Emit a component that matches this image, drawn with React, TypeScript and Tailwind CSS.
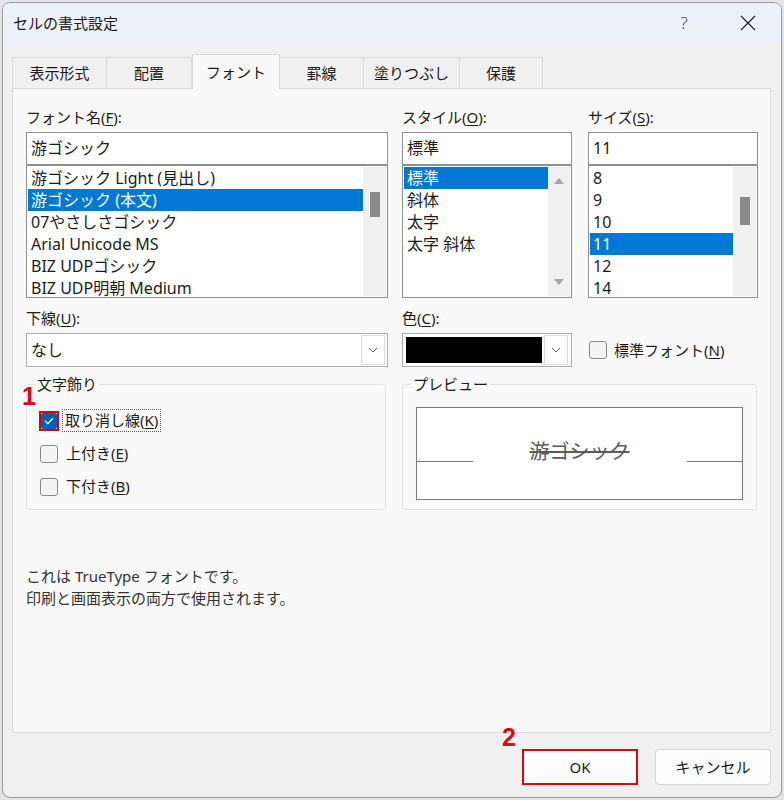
import React from 'react';

const fontFamily = "font-['Noto_Sans','Noto_Sans_CJK_JP',sans-serif]";

function Chevron() {
  return (
    <svg width="10" height="6" viewBox="0 0 10 6">
      <path d="M1 1 L5 5 L9 1" fill="none" stroke="#606060" strokeWidth="1" />
    </svg>
  );
}

function CheckBox({ checked = false }: { checked?: boolean }) {
  if (checked) {
    return (
      <div className="w-[20px] h-[20px] border-2 border-[#e00000] flex items-center justify-center shrink-0">
        <div className="w-[16px] h-[16px] bg-[#005fb8] rounded-[2px] flex items-center justify-center">
          <svg width="10" height="8" viewBox="0 0 10 8">
            <path d="M1 4 L3.8 6.6 L9 1.2" fill="none" stroke="#ffffff" strokeWidth="1.3" />
          </svg>
        </div>
      </div>
    );
  }
  return <div className="w-[18px] h-[18px] border border-[#8a8a8a] bg-[#f4f4f4] rounded-[3px] shrink-0 mx-[1px]" />;
}

function Label({ children }: { children: React.ReactNode }) {
  return <div className="h-[22px] leading-[22px] mb-[4px] text-[15px] text-[#1b1b1b]">{children}</div>;
}

function ListBox({
  items,
  selected,
  scroll,
}: {
  items: string[];
  selected: number;
  scroll: 'thumb' | 'thumbLow' | 'arrows';
}) {
  return (
    <div className="h-[133px] border border-[#8f8f8f] bg-white flex overflow-hidden">
      <div className="flex-1 pt-[1px] pl-[1px]">
        {items.map((item, i) => (
          <div
            key={i}
            className={`h-[22px] leading-[22px] px-[3px] text-[16px] whitespace-nowrap ${
              i === selected ? 'bg-[#0078d4] text-white' : 'text-[#1b1b1b]'
            }`}
          >
            {item}
          </div>
        ))}
      </div>
      {scroll === 'arrows' ? (
        <div className="w-[22px] bg-[#f0f0f0] my-[1px] mr-[1px] flex flex-col items-center justify-between py-[11px]">
          <svg width="10" height="6" viewBox="0 0 10 6">
            <path d="M0 6 L5 0 L10 6 Z" fill="#a6a6a6" />
          </svg>
          <svg width="10" height="6" viewBox="0 0 10 6">
            <path d="M0 0 L5 6 L10 0 Z" fill="#a6a6a6" />
          </svg>
        </div>
      ) : (
        <div
          className={`w-[23px] bg-[#f0f0f0] my-[1px] mr-[1px] flex justify-center ${
            scroll === 'thumb' ? 'pt-[25px]' : 'pt-[30px]'
          }`}
        >
          <div className={`w-[10px] bg-[#8a8a8a] ${scroll === 'thumb' ? 'h-[25px]' : 'h-[28px]'}`} />
        </div>
      )}
    </div>
  );
}

function App() {
  const fonts = [
    '游ゴシック Light (見出し)',
    '游ゴシック (本文)',
    '07やさしさゴシック',
    'Arial Unicode MS',
    'BIZ UDPゴシック',
    'BIZ UDP明朝 Medium',
  ];
  const styles = ['標準', '斜体', '太字', '太字 斜体'];
  const sizes = ['8', '9', '10', '11', '12', '14'];

  const tabs = ['表示形式', '配置', 'フォント', '罫線', '塗りつぶし', '保護'];
  const tabWidths = ['w-[95px]', 'w-[85px]', 'w-[88px]', 'w-[84px]', 'w-[96px]', 'w-[83px]'];

  return (
    <div className={`relative w-[784px] h-[800px] bg-[#e4e4e4] pt-[2px] pl-[2px] ${fontFamily}`}>
      <div className="w-[780px] h-[796px] rounded-[8px] border border-[#9c9c9c] bg-[#f0f0f0] overflow-hidden flex flex-col">
        {/* Title bar */}
        <div className="h-[40px] bg-[#edf1f7] flex items-center pl-[10px] shrink-0">
          <div className="text-[15px] text-[#1b1b1b] flex-1">セルの書式設定</div>
          <div className="text-[17px] text-[#444] font-light w-[20px] text-center mr-[44px]">?</div>
          <div className="w-[20px] flex justify-center mr-[23px]">
            <svg width="16" height="16" viewBox="0 0 16 16">
              <path d="M1 1 L15 15 M15 1 L1 15" stroke="#222" strokeWidth="1.2" />
            </svg>
          </div>
        </div>

        {/* Tabs */}
        <div className="mt-[11px] ml-[9px] h-[34px] flex items-end">
          {tabs.map((t, i) => (
            <div
              key={t}
              className={`${tabWidths[i]} flex items-center justify-center text-[15px] text-[#1b1b1b] border-t border-r border-[#dadada] ${
                i === 0 ? 'border-l' : ''
              } ${i === 2 ? 'h-[35px] -mb-px bg-[#f9f9f9] relative z-10 border-l' : 'h-[31px] bg-[#f0f0f0]'}`}
            >
              {t}
            </div>
          ))}
        </div>

        {/* Panel */}
        <div className="ml-[9px] w-[759px] h-[645px] border border-[#dadada] bg-[#f9f9f9] pl-[13px] pt-[17px] text-[#1b1b1b] shrink-0">
          {/* Row 1 */}
          <div className="flex">
            <div className="w-[362px]">
              <Label>
                フォント名(<span className="underline underline-offset-2">F</span>):
              </Label>
              <div className="h-[33px] border border-[#8f8f8f] bg-white pl-[4px] leading-[31px] text-[16px]">游ゴシック</div>
              <ListBox items={fonts} selected={1} scroll="thumb" />
            </div>
            <div className="w-[170px] ml-[14px]">
              <Label>
                スタイル(<span className="underline underline-offset-2">O</span>):
              </Label>
              <div className="h-[33px] border border-[#8f8f8f] bg-white pl-[4px] leading-[31px] text-[16px]">標準</div>
              <ListBox items={styles} selected={0} scroll="arrows" />
            </div>
            <div className="w-[170px] ml-[16px]">
              <Label>
                サイズ(<span className="underline underline-offset-2">S</span>):
              </Label>
              <div className="h-[33px] border border-[#8f8f8f] bg-white pl-[4px] leading-[31px] text-[16px]">11</div>
              <ListBox items={sizes} selected={3} scroll="thumbLow" />
            </div>
          </div>

          {/* Row 2 */}
          <div className="flex mt-[9px]">
            <div className="w-[362px]">
              <Label>
                下線(<span className="underline underline-offset-2">U</span>):
              </Label>
              <div className="h-[34px] border border-[#ababab] bg-white flex items-center">
                <div className="flex-1 pl-[4px] text-[16px]">なし</div>
                <div className="w-[24px] h-[30px] mr-[2px] border border-[#dcdcdc] bg-white flex items-center justify-center">
                  <Chevron />
                </div>
              </div>
            </div>
            <div className="w-[170px] ml-[14px]">
              <Label>
                色(<span className="underline underline-offset-2">C</span>):
              </Label>
              <div className="h-[34px] border border-[#ababab] bg-white flex items-center p-[3px] gap-[2px]">
                <div className="flex-1 h-[26px] bg-black" />
                <div className="w-[24px] h-[30px] border border-[#dcdcdc] bg-white flex items-center justify-center">
                  <Chevron />
                </div>
              </div>
            </div>
            <div className="w-[170px] ml-[16px] pt-[26px]">
              <div className="h-[34px] flex items-center gap-[6px]">
                <CheckBox />
                <span className="text-[15px]">
                  標準フォント(<span className="underline underline-offset-2">N</span>)
                </span>
              </div>
            </div>
          </div>

          {/* Row 3 */}
          <div className="flex mt-[17px]">
            <div className="relative w-[360px] h-[126px] border border-[#e2e2e2] rounded-[3px] pl-[13px] pt-[19px]">
              <div className="absolute -top-[12px] left-[8px] px-[2px] bg-[#f9f9f9] text-[15px] leading-[22px]">文字飾り</div>
              <div className="h-[33px] flex items-center -ml-[1px]">
                <CheckBox checked />
                <span className="ml-[3px] border border-dotted border-[#555] px-[2px] leading-[21px] text-[15px]">
                  取り消し線(<span className="underline underline-offset-2">K</span>)
                </span>
              </div>
              <div className="h-[33px] flex items-center -ml-[1px]">
                <CheckBox />
                <span className="ml-[4px] border border-transparent px-[2px] leading-[21px] text-[15px]">
                  上付き(<span className="underline underline-offset-2">E</span>)
                </span>
              </div>
              <div className="h-[33px] flex items-center -ml-[1px]">
                <CheckBox />
                <span className="ml-[4px] border border-transparent px-[2px] leading-[21px] text-[15px]">
                  下付き(<span className="underline underline-offset-2">B</span>)
                </span>
              </div>
            </div>
            <div className="relative w-[355px] h-[126px] ml-[16px] border border-[#e2e2e2] rounded-[3px] pl-[13px] pt-[22px]">
              <div className="absolute -top-[12px] left-[8px] px-[2px] bg-[#f9f9f9] text-[15px] leading-[22px]">プレビュー</div>
              <div className="relative w-[327px] h-[93px] border border-[#7a7a7a] bg-white flex items-center justify-center">
                <div className="absolute left-0 top-[53px] w-[56px] h-px bg-[#7a7a7a]" />
                <div className="absolute right-0 top-[53px] w-[55px] h-px bg-[#7a7a7a]" />
                <span className="text-[20px] text-[#5a5a5a] line-through decoration-[#5a5a5a] -mt-[4px]">游ゴシック</span>
              </div>
            </div>
          </div>

          {/* Description */}
          <div className="mt-[55px] text-[15px] leading-[22px] text-[#333]">
            <div>これは TrueType フォントです。</div>
            <div>印刷と画面表示の両方で使用されます。</div>
          </div>
        </div>

        {/* Buttons */}
        <div className="mt-[16px] flex justify-end gap-[17px] pr-[10px]">
          <div className="w-[116px] h-[36px] border-2 border-[#e60012] bg-[#fdfdfd] flex items-center justify-center text-[15px] text-[#1b1b1b]">
            OK
          </div>
          <div className="w-[116px] h-[36px] border border-[#d4d4d4] rounded-[4px] bg-[#fdfdfd] flex items-center justify-center text-[15px] text-[#1b1b1b]">
            キャンセル
          </div>
        </div>
      </div>

      {/* Step badges */}
      <div className="absolute left-[22px] top-[381px] font-['Liberation_Sans',sans-serif] font-bold text-[25px] leading-[30px] text-[#e60012] [text-shadow:0_0_2px_#fff,0_0_2px_#fff,0_0_2px_#fff]">
        1
      </div>
      <div className="absolute left-[502px] top-[722px] font-['Liberation_Sans',sans-serif] font-bold text-[25px] leading-[30px] text-[#e60012] [text-shadow:0_0_2px_#fff,0_0_2px_#fff,0_0_2px_#fff]">
        2
      </div>
    </div>
  );
}

export default App;
